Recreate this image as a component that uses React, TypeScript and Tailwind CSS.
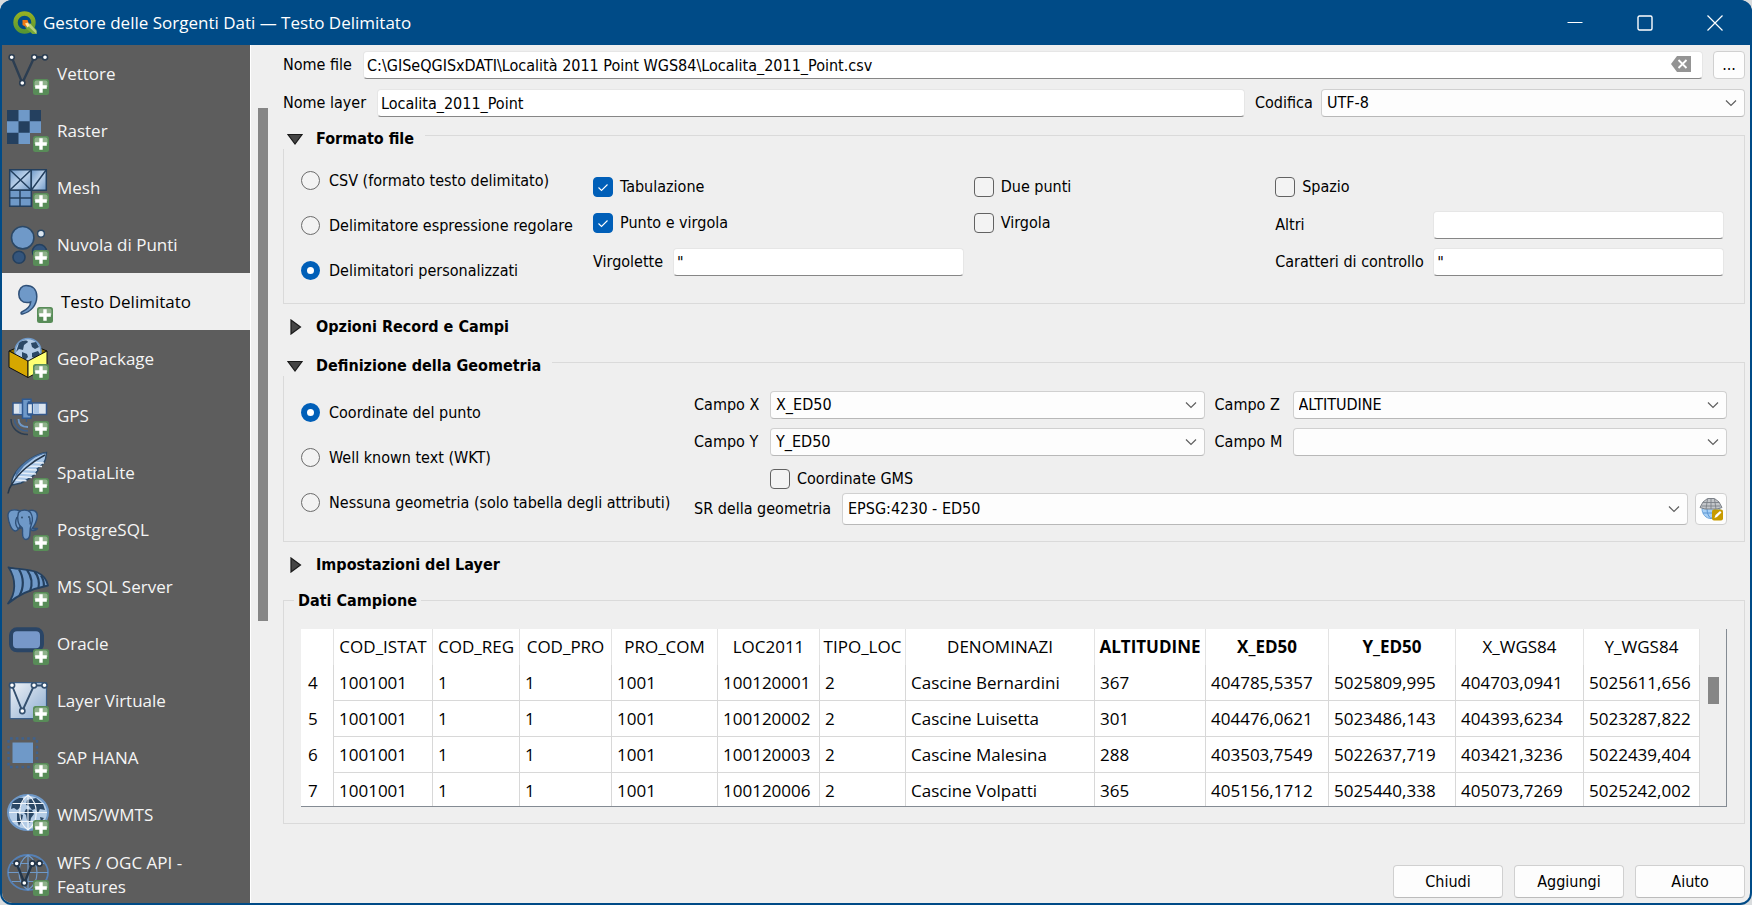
import { useState } from 'react'
import type { ReactNode } from 'react'

const NAVY = '#2b4866'
const BLUE = '#6f99c8'
const PALE = '#b4cce6'

function PlusBadge() {
    return (
        <g>
            <rect x="26" y="26" width="16" height="16" rx="2.5" fill="#588c58" />
            <path d="M27.5 34v-4.500a2 2 0 0 1 2-2h9a2 2 0 0 1 2 2v4.500z" fill="#8fb18b" />
            <path d="M34 28.200v11.600M28.200 34h11.600" stroke="#fff" strokeWidth="3.4" />
        </g>
    )
}

function Icon({ children }: { children: ReactNode }) {
    return (
        <svg viewBox="0 0 42 42" className="h-[42px] w-[42px] shrink-0 overflow-visible" aria-hidden="true">
            {children}
            <PlusBadge />
        </svg>
    )
}

const nodes = (points: number[][], stroke: string) =>
    points.map(([x, y]) => <circle key={`${x}-${y}`} cx={x} cy={y} r="2.6" fill="#fff" stroke={stroke} strokeWidth="1.6" />)

const VectorIcon = () => (
    <Icon>
        <path d="M4.700 4.300 15.300 30 27.300 4.300H38" fill="none" stroke="#2c3e52" strokeWidth="2.4" />
        {nodes([[4.7, 4.3], [15.3, 30], [27.3, 4.3], [38, 4.3]], '#2c3e52')}
    </Icon>
)

const RasterIcon = () => (
    <Icon>
        <path d="M0 0h34v23H23v11H0z" fill={BLUE} />
        <path d="M0 0h11.500v11.300H0zM22.700 0H34v11.300H22.700zM11.500 11.300h11.200v11.400H11.500zM0 22.700h11.500V34H0z" fill="#24405f" />
    </Icon>
)

const MeshIcon = () => (
    <Icon>
        <defs>
            <linearGradient id="mesh" x1="0" y1="0" x2="1" y2="1">
                <stop offset="0" stopColor={BLUE} />
                <stop offset=".5" stopColor="#bdd2ea" />
                <stop offset="1" stopColor={BLUE} />
            </linearGradient>
        </defs>
        <g stroke="#24405f" strokeWidth="1.5">
            <path d="M2.700 2.700h21.600v20.600H2.700z" fill="url(#mesh)" />
            <path d="M24.300 2.700h15v20.600h-15z" fill="url(#mesh)" />
            <path d="M2.700 23.300h21.600v16H2.700z" fill={BLUE} />
            <path d="m2.700 2.700 21.600 20.600M24.300 2.700 2.700 23.300m21.600 0L39.300 2.700M13 23.300v16M2.700 31h21.600" fill="none" />
        </g>
    </Icon>
)

const PointCloudIcon = () => (
    <Icon>
        <circle cx="15.700" cy="13.700" r="11.200" fill={BLUE} stroke={NAVY} strokeWidth="1.6" />
        <circle cx="34" cy="9.700" r="3.400" fill="#dbe5ef" stroke={NAVY} strokeWidth="1.4" />
        <circle cx="12" cy="33.300" r="6" fill="#34557c" stroke="#24405f" strokeWidth="1.6" />
        <circle cx="32.500" cy="27.500" r="7" fill="#34557c" stroke="#24405f" strokeWidth="1.6" />
    </Icon>
)

const TextIcon = () => (
    <Icon>
        <path
            d="M15 4.500c7 0 10.800 4.500 10.800 11 0 9-6.300 15.500-14.300 17.500-1.500.4-2-1.300-.7-2 5.200-2.500 8.700-6 8.900-10-1 .5-2.200.6-3.700.6-5 0-8.200-3.600-8.200-8.400 0-5 3-8.700 7.200-8.700z"
            fill={BLUE}
            stroke="#2f5078"
            strokeWidth="1.5"
        />
    </Icon>
)

const GeoPackageIcon = () => (
    <Icon>
        <path d="m2 13 19-8 19 8-19 10z" fill="#8a6d00" stroke="#111" />
        <circle cx="21" cy="13.500" r="13" fill={PALE} stroke={BLUE} strokeWidth="1.6" />
        <path d="M12 5c4-3 8-3 9-1l-4 3-1 5-4-1-3 3zM24 5l5-1 3 5-4 2-3-2zM15 14l5 2 1 3-3 3-3-3zM25 15l6-2 2 3-4 5-4-2z" fill={NAVY} />
        <path d="m2 13 19 10v16.500L2 29.300z" fill="#d6a700" stroke="#111" />
        <path d="m40 13-19 10v16.500l19-10.200z" fill="#ffff73" stroke="#111" />
    </Icon>
)

const GpsIcon = () => (
    <Icon>
        <path d="M6 8h10v11.500H6zM25 8h14.500v11.500H25z" fill="#dce5ef" stroke="#35588a" strokeWidth="1.5" />
        <path d="M12 9h3v10h-3zM27 9h5v10h-5z" fill="#a9c4e4" />
        <path d="M15.500 4.200h8.500V7h-2.500v13h2.500v3.200h-8.500z" fill={BLUE} stroke="#2f5a92" strokeWidth="1.5" />
        <path d="M20.500 8.500v10.500h5V8.500zM19.500 23v4" fill="#dce5ef" stroke="#2f5a92" strokeWidth="1.3" />
        <path d="M4 24c0 9 7 15.500 17 15.500" fill="none" stroke="#2c3e52" strokeWidth="1.4" />
        <path d="M7.500 24c0 7 5.500 12 13.500 12" fill="none" stroke="#3e5f88" strokeWidth="1.600" />
        <path d="M11.500 24c0 5 3.500 8 9.500 8" fill="none" stroke={BLUE} strokeWidth="1.800" />
    </Icon>
)

const FeatherIcon = () => (
    <Icon>
        <path d="M39.500.5C29 2 16 10 9 20 5.500 25 4.500 30 5 32l.5 1L14 31C22 27 27 24 29 21l2-3-1-1c6-4 8-8 8.500-10z" fill="#a9c7e8" stroke={NAVY} strokeWidth="1.4" />
        <path d="m14 21 15 1M11 24.500l14 1M8.500 28l11 .8M17 17.500l13 .5M21 14l14 .5M26 10.500l11 .5" stroke="#e6eef7" strokeWidth="1.500" />
        <path d="M39.500.5 28 5.500 17 14 8 26l1-6C16 10 28 2 39.500.5z" fill="#4c75a5" />
        <path d="M38 3C26 9 12 20 5 32 2.500 35.500 1.500 38 1 41.500" fill="none" stroke="#24364a" strokeWidth="1.600" />
    </Icon>
)

const PostgresIcon = () => (
    <Icon>
        <g fill={BLUE} stroke="#2f5078" strokeWidth="1.4" strokeLinejoin="round">
            <path d="M21 2c5-2 9.500 0 9.300 5-.2 5-3.300 10.500-5.300 12.500h5.500c-1 1.500-3 2-5.500 2L21 18z" />
            <path d="M13 2C6-.5.500 1 1 7.500 1.500 13.500 4.500 21.500 8 22c2.500.3 4-2.500 5-4.500z" />
            <path d="M11.500 3.500c2.500-3 9-3.500 12 0 2 3.500 2.500 8 1 11.500-1 2.500-1.500 5-1.500 8 0 4.500-.8 7.500-4 7.500-3.500 0-3.500-3.500-3.500-6.500 0-2 .5-4-.5-5.500-4.500-2.500-5-10-3.500-15z" />
            <path d="M10 8c-2 4-2 8 1 11.500l3.500-.5M23 8.500c-1 2 1 4 0 7" fill="none" />
        </g>
        <circle cx="15" cy="8.500" r=".9" fill={NAVY} />
        <circle cx="22" cy="8" r=".9" fill={NAVY} />
    </Icon>
)

const MsSqlIcon = () => (
    <Icon>
        <path d="M1.500 1.300C14 4.500 37 .500 41 19.500 29 22 13 27 1 37.500 9 28 9.500 13 1.500 1.300z" fill={BLUE} stroke="#24405f" strokeWidth="1.8" strokeLinejoin="round" />
        <path d="M12 3.500c5 8 5 18 .5 26M20 3.800c5 7 5.500 15 3 21.500M27.500 5.500c4 5 5 11 4 16.500M34 9.500c2 3 3 7 3 11" fill="none" stroke="#24405f" strokeWidth="2.200" />
    </Icon>
)

const OracleIcon = () => (
    <Icon>
        <rect x="4" y="6.300" width="31" height="21" rx="6" fill="#7798c9" stroke="#2a4566" strokeWidth="4" />
    </Icon>
)

const VirtualIcon = () => (
    <Icon>
        <defs>
            <linearGradient id="virtual" x1="0" y1="0" x2="1" y2="1">
                <stop offset="0" stopColor="#f0f3f7" />
                <stop offset="1" stopColor="#8aabd0" />
            </linearGradient>
        </defs>
        <rect x="3" y="2.700" width="36.500" height="36" rx="1" fill="url(#virtual)" stroke="#3d5f87" strokeWidth="1.2" />
        <path d="M5 5.500 15.300 31 27 5.500h11" fill="none" stroke="#34506f" strokeWidth="1.900" />
        {nodes([[5, 5.3], [15.3, 31], [27, 5.3], [37.5, 5.3]], '#34506f')}
    </Icon>
)

const HanaIcon = () => (
    <Icon>
        <rect x="5.500" y="5.500" width="20.500" height="20.500" fill={BLUE} />
        <rect x="1.500" y="1.500" width="28.500" height="28.500" fill="none" stroke="#3f618c" strokeWidth="2.400" strokeDasharray="2.700 3" strokeDashoffset="-1.5" />
    </Icon>
)

const WmsIcon = () => (
    <Icon>
        <ellipse cx="21" cy="18.500" rx="20" ry="17.500" fill={PALE} stroke={BLUE} strokeWidth="2" />
        <path d="M5 9c3-4 8-6 11-5l1 3-4 3 1 3-4 3-3-2-3 1zM10 19l6 2-1 5-3 6-2-5zM20 6l9-2 7 6 2 6-5-1-2 4-3-4-3 1-3-4-3-1zM19 15l6 1 2 4-3 4-1 5-3-3-1-5-2-2zM33 23l4 1-3 4z" fill={NAVY} />
        <path d="M21 1v35M2 18.500h38M5.500 9.500h31M5.500 27.500h31M21 1c-11 8-11 27 0 35M21 1c11 8 11 27 0 35" fill="none" stroke="#f2f6fa" strokeWidth="1.100" />
    </Icon>
)

const WfsIcon = () => (
    <Icon>
        <ellipse cx="21" cy="18.500" rx="20" ry="17.500" fill="none" stroke="#5580b5" strokeWidth="1.800" />
        <path d="M21 1v35M1 18.500h40M5 9.500h32M5 27.500h32M21 1C9 9 9 28 21 36M21 1c12 8 12 27 0 35" fill="none" stroke={BLUE} strokeWidth="1.200" />
        <path d="M9.700 9.500 17.300 29 25.300 9.500h7" fill="none" stroke="#24364a" strokeWidth="2.400" />
        {nodes([[9.7, 9.5], [17.3, 29], [25.3, 9.5], [32.5, 9.5]], '#24364a')}
    </Icon>
)

const sources = [
    { name: 'Vettore', icon: VectorIcon },
    { name: 'Raster', icon: RasterIcon },
    { name: 'Mesh', icon: MeshIcon },
    { name: 'Nuvola di Punti', icon: PointCloudIcon },
    { name: 'Testo Delimitato', icon: TextIcon },
    { name: 'GeoPackage', icon: GeoPackageIcon },
    { name: 'GPS', icon: GpsIcon },
    { name: 'SpatiaLite', icon: FeatherIcon },
    { name: 'PostgreSQL', icon: PostgresIcon },
    { name: 'MS SQL Server', icon: MsSqlIcon },
    { name: 'Oracle', icon: OracleIcon },
    { name: 'Layer Virtuale', icon: VirtualIcon },
    { name: 'SAP HANA', icon: HanaIcon },
    { name: 'WMS/WMTS', icon: WmsIcon },
    { name: 'WFS / OGC API - Features', icon: WfsIcon },
]

const columns = [
    { name: 'COD_ISTAT', width: 'w-[99px]' },
    { name: 'COD_REG', width: 'w-[87px]' },
    { name: 'COD_PRO', width: 'w-[92px]' },
    { name: 'PRO_COM', width: 'w-[106px]' },
    { name: 'LOC2011', width: 'w-[102px]' },
    { name: 'TIPO_LOC', width: 'w-[86px]' },
    { name: 'DENOMINAZI', width: 'w-[189px]' },
    { name: 'ALTITUDINE', width: 'w-[111px]', used: true },
    { name: 'X_ED50', width: 'w-[123px]', used: true },
    { name: 'Y_ED50', width: 'w-[127px]', used: true },
    { name: 'X_WGS84', width: 'w-[128px]' },
    { name: 'Y_WGS84', width: 'w-[116px]' },
]

const rows = [
    ['4', '1001001', '1', '1', '1001', '100120001', '2', 'Cascine Bernardini', '367', '404785,5357', '5025809,995', '404703,0941', '5025611,656'],
    ['5', '1001001', '1', '1', '1001', '100120002', '2', 'Cascine Luisetta', '301', '404476,0621', '5023486,143', '404393,6234', '5023287,822'],
    ['6', '1001001', '1', '1', '1001', '100120003', '2', 'Cascine Malesina', '288', '403503,7549', '5022637,719', '403421,3236', '5022439,404'],
    ['7', '1001001', '1', '1', '1001', '100120006', '2', 'Cascine Volpatti', '365', '405156,1712', '5025440,338', '405073,7269', '5025242,002'],
]

const inputStyle =
    'h-7 min-w-0 flex-1 rounded-sm border border-[#e6e6e6] border-b-[#868686] bg-white px-[3px] outline-none'

function Select({ id, value, tall }: { id: string; value: string; tall?: boolean }) {
    return (
        <div className="relative min-w-0 flex-1">
            <select
                id={id}
                className={`${tall ? 'h-8' : 'h-7'} block w-full appearance-none rounded-sm border border-[#d0d0d0] border-b-[#b8b8b8] bg-[#fdfdfd] px-[5px] outline-none`}
            >
                <option>{value}</option>
            </select>
            <svg viewBox="0 0 12 8" className="pointer-events-none absolute top-1/2 right-2 h-2 w-3 -translate-y-1/2" aria-hidden="true">
                <path d="m1 1.500 5 5 5-5" fill="none" stroke="#5f5f5f" strokeWidth="1.2" />
            </svg>
        </div>
    )
}

function Radio({ name, label, checked }: { name: string; label: string; checked?: boolean }) {
    return (
        <label className="flex h-[45px] items-center gap-[9px]">
            <input
                type="radio"
                name={name}
                defaultChecked={checked}
                className="h-[19px] w-[19px] shrink-0 appearance-none rounded-full border border-[#6b6b6b] bg-[#f3f3f3] checked:border-[6px] checked:border-[#005fb8] checked:bg-white"
            />
            {label}
        </label>
    )
}

function Check({ label, checked }: { label: string; checked?: boolean }) {
    return (
        <label className="flex items-center gap-[7px]">
            <span className="relative h-5 w-5">
                <input
                    type="checkbox"
                    defaultChecked={checked}
                    className="peer block h-5 w-5 appearance-none rounded border border-[#626262] bg-[#f3f3f3] checked:border-[#005fb8] checked:bg-[#005fb8]"
                />
                <svg viewBox="0 0 20 20" className="pointer-events-none absolute inset-0 hidden peer-checked:block" aria-hidden="true">
                    <path d="m5.500 10.500 3 3 6-6" fill="none" stroke="#fff" strokeWidth="1.1" />
                </svg>
            </span>
            {label}
        </label>
    )
}

function Arrow({ open }: { open?: boolean }) {
    return (
        <svg viewBox="0 0 16 16" className="h-4 w-4" aria-hidden="true">
            <path d={open ? 'M1 3.500h14l-7 9.500z' : 'M4 1v14l9.500-7z'} fill="#454545" stroke="#1a1a1a" strokeWidth="1.2" />
        </svg>
    )
}

function GroupLegend({ title }: { title: string }) {
    return (
        <legend className="-ml-px h-7 bg-[#efefef] pt-2 pr-[11px] pl-1">
            <button type="button" aria-expanded="true" className="flex h-5 items-center gap-[13px] font-bold">
                <Arrow open />
                {title}
            </button>
        </legend>
    )
}

function ClosedGroup({ title }: { title: string }) {
    return (
        <button type="button" aria-expanded="false" className="flex h-7 items-center gap-[13px] self-start pl-1 font-bold">
            <Arrow />
            {title}
        </button>
    )
}

function TitleBar() {
    return (
        <header className="flex h-[45px] shrink-0 items-center bg-[#004b87] pr-0.5 pl-[13px] font-['Open_Sans',sans-serif] text-[17px] text-white">
            <svg viewBox="0 0 24 24" className="h-6 w-6" aria-hidden="true">
                <defs>
                    <linearGradient id="ring" x1="0" y1="0" x2="0" y2="1">
                        <stop offset="0" stopColor="#93b023" />
                        <stop offset="1" stopColor="#589632" />
                    </linearGradient>
                </defs>
                <circle cx="11.500" cy="11.500" r="9" fill="none" stroke="url(#ring)" strokeWidth="4.400" />
                <path d="m13 13 4.500-.5 6 6.500v4h-4L12.500 17z" fill="#76a838" />
                <path d="m14 14 3-1.500 6.500 7.500v3z" fill="#b5cf7a" />
                <path d="M9.500 9h5l1.500 4-3 3-3.500-2z" fill="#ee7913" />
                <path d="m12 12.500 3-1 1.500 3-2 2z" fill="#fbe5a8" />
            </svg>
            <h1 className="ml-1.5 flex-1">Gestore delle Sorgenti Dati — Testo Delimitato</h1>
            <button type="button" aria-label="Riduci a icona" className="flex h-full w-[70px] items-center justify-center">
                <svg viewBox="0 0 16 16" className="h-4 w-4"><path d="M.5 7.500h15" stroke="#fff" /></svg>
            </button>
            <button type="button" aria-label="Ingrandisci" className="flex h-full w-[70px] items-center justify-center">
                <svg viewBox="0 0 16 16" className="h-4 w-4"><rect x="1" y="1" width="14" height="14" rx="1.500" fill="none" stroke="#fff" strokeWidth="1.4" /></svg>
            </button>
            <button type="button" aria-label="Chiudi finestra" className="flex h-full w-[70px] items-center justify-center">
                <svg viewBox="0 0 16 16" className="h-4 w-4"><path d="m.5.500 15 15m0-15-15 15" stroke="#fff" strokeWidth="1.2" /></svg>
            </button>
        </header>
    )
}

function Sidebar() {
    const [selected, setSelected] = useState('Testo Delimitato')
    return (
        <nav className="flex w-[281px] shrink-0 overflow-hidden font-['Open_Sans',sans-serif] text-[17px] leading-6">
            <ul className="w-[249px] overflow-hidden border-r border-white bg-[#5d5d5d]">
                {sources.map(({ name, icon: SourceIcon }) => (
                    <li key={name}>
                        <button
                            type="button"
                            onClick={() => setSelected(name)}
                            className={`flex min-h-[57px] w-full items-center gap-2 py-2 pr-8 text-left ${
                                name === selected ? 'bg-[#efefef] pl-[9px] text-black' : 'pl-[5px] text-[#f5f5f5]'
                            }`}
                        >
                            <span className="-my-2"><SourceIcon /></span>
                            {name}
                        </button>
                    </li>
                ))}
            </ul>
            <div className="pt-[63px] pl-[7px]">
                <div className="h-[513px] w-2.5 bg-[#868686]" />
            </div>
        </nav>
    )
}

function FileFormat() {
    return (
        <fieldset className="mt-1 min-w-0 border border-[#dadada]">
            <GroupLegend title="Formato file" />
            <div className="flex pr-5 pl-[17px]">
                <div className="w-[292px] shrink-0 pt-[9px] pb-2.5">
                    <Radio name="formato" label="CSV (formato testo delimitato)" />
                    <Radio name="formato" label="Delimitatore espressione regolare" />
                    <Radio name="formato" label="Delimitatori personalizzati" checked />
                </div>
                <div className="grid flex-1 grid-cols-[380fr_301fr_448fr] grid-rows-[36px_36px_42px] items-center pt-5">
                    <Check label="Tabulazione" checked />
                    <Check label="Due punti" />
                    <Check label="Spazio" />
                    <Check label="Punto e virgola" checked />
                    <Check label="Virgola" />
                    <div className="flex items-center pt-1">
                        <label htmlFor="altri" className="w-[158px]">Altri</label>
                        <input id="altri" className={inputStyle} />
                    </div>
                    <div className="flex items-center pr-2.5">
                        <label htmlFor="virgolette" className="w-20">Virgolette</label>
                        <input id="virgolette" defaultValue={'"'} className={inputStyle} />
                    </div>
                    <div className="col-start-3 flex items-center">
                        <label htmlFor="controllo" className="w-[158px]">Caratteri di controllo</label>
                        <input id="controllo" defaultValue={'"'} className={inputStyle} />
                    </div>
                </div>
            </div>
        </fieldset>
    )
}

function Geometry() {
    return (
        <fieldset className="mt-[7px] min-w-0 border border-[#dadada]">
            <GroupLegend title="Definizione della Geometria" />
            <div className="flex px-[17px]">
                <div className="w-[393px] shrink-0 pt-3.5 pb-4">
                    <Radio name="geometria" label="Coordinate del punto" checked />
                    <Radio name="geometria" label="Well known text (WKT)" />
                    <Radio name="geometria" label="Nessuna geometria (solo tabella degli attributi)" />
                </div>
                <div className="flex-1 pt-[15px]">
                    <div className="flex items-center">
                        <label htmlFor="campo-x" className="w-[76px]">Campo X</label>
                        <Select id="campo-x" value="X_ED50" />
                        <label htmlFor="campo-z" className="ml-2.5 w-[78px]">Campo Z</label>
                        <Select id="campo-z" value="ALTITUDINE" />
                    </div>
                    <div className="mt-[9px] flex items-center">
                        <label htmlFor="campo-y" className="w-[76px]">Campo Y</label>
                        <Select id="campo-y" value="Y_ED50" />
                        <label htmlFor="campo-m" className="ml-2.5 w-[78px]">Campo M</label>
                        <Select id="campo-m" value="" />
                    </div>
                    <div className="mt-[9px] flex h-7 items-center pl-[76px]">
                        <Check label="Coordinate GMS" />
                    </div>
                    <div className="flex items-center">
                        <label htmlFor="sr" className="w-[148px]">SR della geometria</label>
                        <Select id="sr" value="EPSG:4230 - ED50" tall />
                        <button
                            type="button"
                            aria-label="Seleziona SR"
                            className="ml-[7px] flex h-8 w-8 items-center justify-center rounded border border-[#d0d0d0] bg-[#fdfdfd]"
                        >
                            <svg viewBox="0 0 24 24" className="h-6 w-6" aria-hidden="true">
                                <path d="M3 11.500h18c0 6-4 10-9 10s-9-4-9-10z" fill="#a8d0f5" stroke="#6ea5dc" />
                                <path d="M8 12c0 5 2 8 4 9.500 2-1.500 4-4.500 4-9.500M4 16h16" fill="none" stroke="#5b95d2" />
                                <path d="M8.500 1.500h7L20 5l3 5.500-5 1.500H6l-5-1.500L4 5z" fill="#c3c6ca" stroke="#7c8188" />
                                <path d="M8.500 2 7 12M15.500 2 17 12M12 1.500V12M4 5.500h16M2.500 9h19" stroke="#7c8188" strokeWidth=".9" />
                                <rect x="13" y="12.500" width="11" height="11" rx="2" fill="#c79b00" />
                                <path d="m15.500 21 1-3 4.500-4 1.500 1.500-4.500 4.500z" fill="#fff" />
                            </svg>
                        </button>
                    </div>
                </div>
            </div>
        </fieldset>
    )
}

function SampleData() {
    return (
        <fieldset className="mt-[11px] min-w-0 border border-[#dadada]">
            <legend className="ml-2.5 px-1 leading-[21px] font-bold">Dati Campione</legend>
            <div className="mx-[17px] mt-[18px] mb-4 flex h-[178px] overflow-hidden border-r border-b border-[#848b93] bg-white font-['Open_Sans',sans-serif] text-[17px] leading-6">
                <table className="w-full flex-1 table-fixed border-separate border-spacing-0 self-start text-left whitespace-nowrap">
                    <thead>
                        <tr className="h-9">
                            <th className="w-[33px] border-r border-[#e3e3e3]" />
                            {columns.map((c) => (
                                <th
                                    key={c.name}
                                    scope="col"
                                    className={`${c.width} ${c.used ? 'font-bold' : 'font-normal'} border-r border-[#e3e3e3] p-0 text-center`}
                                >
                                    {c.name}
                                </th>
                            ))}
                        </tr>
                    </thead>
                    <tbody>
                        {rows.map(([id, ...cells]) => (
                            <tr key={id} className="h-9">
                                <th scope="row" className="border-r border-[#d8d8d8] p-0 pl-[7px] font-normal">{id}</th>
                                {cells.map((cell, i) => (
                                    <td key={i} className="border-r border-b border-[#d8d8d8] p-0 pl-[5px]">{cell}</td>
                                ))}
                            </tr>
                        ))}
                    </tbody>
                </table>
                <div className="w-[26px] shrink-0 bg-[#efefef] pt-12 pl-2">
                    <div className="h-[27px] w-[11px] bg-[#868686]" />
                </div>
            </div>
        </fieldset>
    )
}

export default function App() {
    return (
        <div className="h-screen bg-[#d9dcde] text-base leading-5 text-black">
            <div className="flex h-full flex-col overflow-hidden rounded-xl bg-[#004b87]">
                <TitleBar />
                <div className="mx-0.5 mb-0.5 flex min-h-0 flex-1 overflow-hidden rounded-b-[10px] bg-[#efefef]">
                    <Sidebar />
                    <main className="flex min-w-0 flex-1 flex-col pt-1.5 pr-[5px] font-['DejaVu_Sans_Condensed','DejaVu_Sans',sans-serif]">
                        <div className="flex items-center">
                            <label htmlFor="nome-file" className="w-20">Nome file</label>
                            <div className="relative flex flex-1">
                                <input
                                    id="nome-file"
                                    defaultValue="C:\GISeQGISxDATI\Località 2011 Point WGS84\Localita_2011_Point.csv"
                                    className={inputStyle}
                                />
                                <button type="button" aria-label="Cancella" className="absolute top-[5px] right-3">
                                    <svg viewBox="0 0 20 16" className="h-4 w-5" aria-hidden="true">
                                        <path d="M6 0h14v16H6L0 8z" fill="#949494" />
                                        <path d="m7.500 4 8 8m0-8-8 8" stroke="#fff" strokeWidth="1.8" />
                                    </svg>
                                </button>
                            </div>
                            <button type="button" className="ml-2.5 h-7 w-8 rounded border border-[#d0d0d0] bg-[#fdfdfd]">...</button>
                        </div>
                        <div className="mt-2.5 flex items-center">
                            <label htmlFor="nome-layer" className="w-[94px]">Nome layer</label>
                            <div className="flex flex-[868]">
                                <input id="nome-layer" defaultValue="Localita_2011_Point" className={inputStyle} />
                            </div>
                            <label htmlFor="codifica" className="ml-2.5 w-[66px]">Codifica</label>
                            <div className="flex flex-[424]">
                                <Select id="codifica" value="UTF-8" />
                            </div>
                        </div>
                        <FileFormat />
                        <div className="mt-[9px] flex flex-col">
                            <ClosedGroup title="Opzioni Record e Campi" />
                        </div>
                        <Geometry />
                        <div className="mt-[9px] flex flex-col">
                            <ClosedGroup title="Impostazioni del Layer" />
                        </div>
                        <SampleData />
                        <footer className="mt-auto flex justify-end gap-[11px] pb-[5px]">
                            {['Chiudi', 'Aggiungi', 'Aiuto'].map((label) => (
                                <button
                                    key={label}
                                    type="button"
                                    className="h-[33px] w-[110px] rounded border border-[#d0d0d0] border-b-[#bcbcbc] bg-[#fdfdfd]"
                                >
                                    {label}
                                </button>
                            ))}
                        </footer>
                    </main>
                </div>
            </div>
        </div>
    )
}
